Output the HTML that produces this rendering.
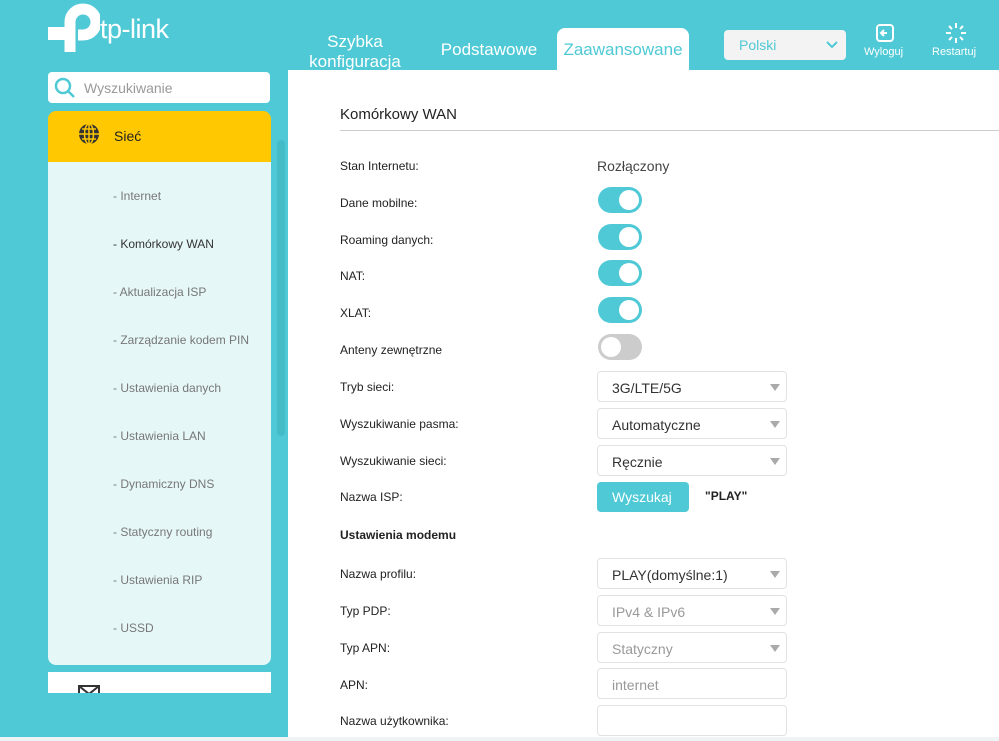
<!DOCTYPE html>
<html><head><meta charset="utf-8"><style>
*{margin:0;padding:0;box-sizing:border-box}
body{width:999px;height:741px;overflow:hidden;background:#4ec9d5;font-family:"Liberation Sans",sans-serif;position:relative}
.a{position:absolute}
.tab{color:#fff;font-size:17px;text-align:center;line-height:20px}
.lbl{position:absolute;left:340px;font-size:12px;color:#222}
.sub{position:absolute;left:113px;font-size:12px;color:#777}
.tg{position:absolute;left:598px;width:44px;height:26px;border-radius:13px;background:#4ec9d5}
.tg:after{content:"";position:absolute;right:3px;top:3px;width:20px;height:20px;border-radius:50%;background:#fff}
.tg.off{background:#ccc}.tg.off:after{right:auto;left:3px}
.sel{position:absolute;left:597px;width:190px;height:31px;border:1px solid #e2e2e2;border-radius:4px;background:#fff;font-size:14px;color:#333;padding:8px 0 0 14px}
.sel:after{content:"";position:absolute;right:6px;top:12px;border:5px solid transparent;border-top:7px solid #aaa}
.sel.g{color:#999}
.sel.n:after{display:none}
</style></head><body>
<svg class="a" style="left:46px;top:2px" width="54" height="52" viewBox="0 0 54 52"><path d="M24 50V20a13 13 0 1 1 13 13h-5" fill="none" stroke="#fff" stroke-width="11"/><rect x="2" y="25" width="20" height="13" fill="#fff"/></svg>
<div class="a" style="left:100px;top:14px;color:#fff;font-size:27px;letter-spacing:-0.5px">tp-link</div>
<div class="a tab" style="left:300px;top:32px;width:110px">Szybka<br>konfiguracja</div>
<div class="a tab" style="left:436px;top:40px;width:106px">Podstawowe</div>
<div class="a" style="left:557px;top:28px;width:132px;height:44px;background:#fff;border-radius:8px 8px 0 0"></div>
<div class="a tab" style="left:557px;top:40px;width:132px;color:#4ec9d5">Zaawansowane</div>
<div class="a" style="left:724px;top:30px;width:122px;height:30px;background:#f3f3f3;border-radius:4px;color:#4ec9d5;font-size:14px;padding:7px 0 0 15px">Polski<svg style="position:absolute;right:8px;top:11px" width="12" height="8"><path d="M1 1l5 5 5-5" fill="none" stroke="#4ec9d5" stroke-width="2"/></svg></div>
<svg class="a" style="left:875px;top:23px" width="20" height="20"><rect x="2" y="2" width="16" height="16" rx="3" fill="none" stroke="#fff" stroke-width="2"/><path d="M12 10H7M9 7l-3 3 3 3" stroke="#fff" stroke-width="2" fill="none"/></svg>
<div class="a" style="left:864px;top:46px;color:#fff;font-size:11px">Wyloguj</div>
<svg class="a" style="left:945px;top:22px" width="22" height="22" stroke="#fff" stroke-width="2"><path d="M11 1v5M11 16v5M1 11h5M16 11h5M4 4l3 3M15 15l3 3M4 18l3-3M15 7l3-3"/></svg>
<div class="a" style="left:932px;top:46px;color:#fff;font-size:11px">Restartuj</div>
<div class="a" style="left:48px;top:72px;width:222px;height:31px;background:#fff;border-radius:4px"></div>
<svg class="a" style="left:54px;top:77px" width="22" height="22"><circle cx="9" cy="9" r="7" fill="none" stroke="#4ec9d5" stroke-width="2.5"/><path d="M14 14l6 6" stroke="#4ec9d5" stroke-width="2.5"/></svg>
<div class="a" style="left:84px;top:80px;color:#999;font-size:14px">Wyszukiwanie</div>
<div class="a" style="left:48px;top:161px;width:223px;height:504px;background:#e6f7f8;border-radius:0 0 8px 8px"></div>
<div class="a" style="left:48px;top:111px;width:223px;height:51px;background:#ffc800;border-radius:8px 8px 0 0"></div>
<svg class="a" style="left:78px;top:123px" width="22" height="22"><circle cx="11" cy="11" r="10" fill="#333"/><path d="M1 11h20M11 1v20M4 6h14M4 16h14" stroke="#ffc800" stroke-width="1.5"/><ellipse cx="11" cy="11" rx="4.5" ry="10" fill="none" stroke="#ffc800" stroke-width="1.5"/></svg>
<div class="a" style="left:114px;top:128px;font-size:14px;color:#222">Sieć</div>
<div class="a" style="left:277px;top:140px;width:8px;height:296px;background:#44bcc8;border-radius:4px"></div>
<div class="sub" style="top:189px">- Internet</div>
<div class="sub" style="top:237px;color:#333">- Komórkowy WAN</div>
<div class="sub" style="top:285px">- Aktualizacja ISP</div>
<div class="sub" style="top:333px">- Zarządzanie kodem PIN</div>
<div class="sub" style="top:381px">- Ustawienia danych</div>
<div class="sub" style="top:429px">- Ustawienia LAN</div>
<div class="sub" style="top:477px">- Dynamiczny DNS</div>
<div class="sub" style="top:525px">- Statyczny routing</div>
<div class="sub" style="top:573px">- Ustawienia RIP</div>
<div class="sub" style="top:621px">- USSD</div>
<div class="a" style="left:48px;top:672px;width:223px;height:21px;background:#fff;overflow:hidden"><svg style="position:absolute;left:30px;top:13px" width="22" height="16"><rect x="1" y="1" width="20" height="14" fill="none" stroke="#333" stroke-width="2"/><path d="M1 1l10 8 10-8" fill="none" stroke="#333" stroke-width="2"/></svg></div>
<div class="a" style="left:288px;top:70px;width:711px;height:667px;background:#fff"></div>
<div class="a" style="left:0;top:737px;width:999px;height:4px;background:#eef3f6"></div>
<div class="a" style="left:340px;top:106px;font-size:15px;color:#222">Komórkowy WAN</div>
<div class="a" style="left:340px;top:130px;width:659px;height:1px;background:#ccc"></div>
<div class="lbl" style="top:159px">Stan Internetu:</div>
<div class="a" style="left:597px;top:158px;font-size:14px;color:#444">Rozłączony</div>
<div class="lbl" style="top:196px">Dane mobilne:</div><div class="tg" style="top:187px"></div>
<div class="lbl" style="top:233px">Roaming danych:</div><div class="tg" style="top:224px"></div>
<div class="lbl" style="top:269px">NAT:</div><div class="tg" style="top:260px"></div>
<div class="lbl" style="top:306px">XLAT:</div><div class="tg" style="top:297px"></div>
<div class="lbl" style="top:343px">Anteny zewnętrzne</div><div class="tg off" style="top:334px"></div>
<div class="lbl" style="top:380px">Tryb sieci:</div><div class="sel" style="top:371px">3G/LTE/5G</div>
<div class="lbl" style="top:417px">Wyszukiwanie pasma:</div><div class="sel" style="top:408px">Automatyczne</div>
<div class="lbl" style="top:454px">Wyszukiwanie sieci:</div><div class="sel" style="top:445px">Ręcznie</div>
<div class="lbl" style="top:490px">Nazwa ISP:</div>
<div class="a" style="left:597px;top:482px;width:92px;height:30px;background:#4ec9d5;border-radius:4px;color:#fff;font-size:14px;padding:7px 0 0 15px">Wyszukaj</div>
<div class="a" style="left:705px;top:489px;font-size:12px;font-weight:bold;color:#222">"PLAY"</div>
<div class="lbl" style="top:528px;font-weight:bold">Ustawienia modemu</div>
<div class="lbl" style="top:567px">Nazwa profilu:</div><div class="sel" style="top:558px">PLAY(domyślne:1)</div>
<div class="lbl" style="top:604px">Typ PDP:</div><div class="sel g" style="top:595px">IPv4 &amp; IPv6</div>
<div class="lbl" style="top:641px">Typ APN:</div><div class="sel g" style="top:632px">Statyczny</div>
<div class="lbl" style="top:678px">APN:</div><div class="sel g n" style="top:668px">internet</div>
<div class="lbl" style="top:714px">Nazwa użytkownika:</div><div class="sel n" style="top:705px"></div>
</body></html>
